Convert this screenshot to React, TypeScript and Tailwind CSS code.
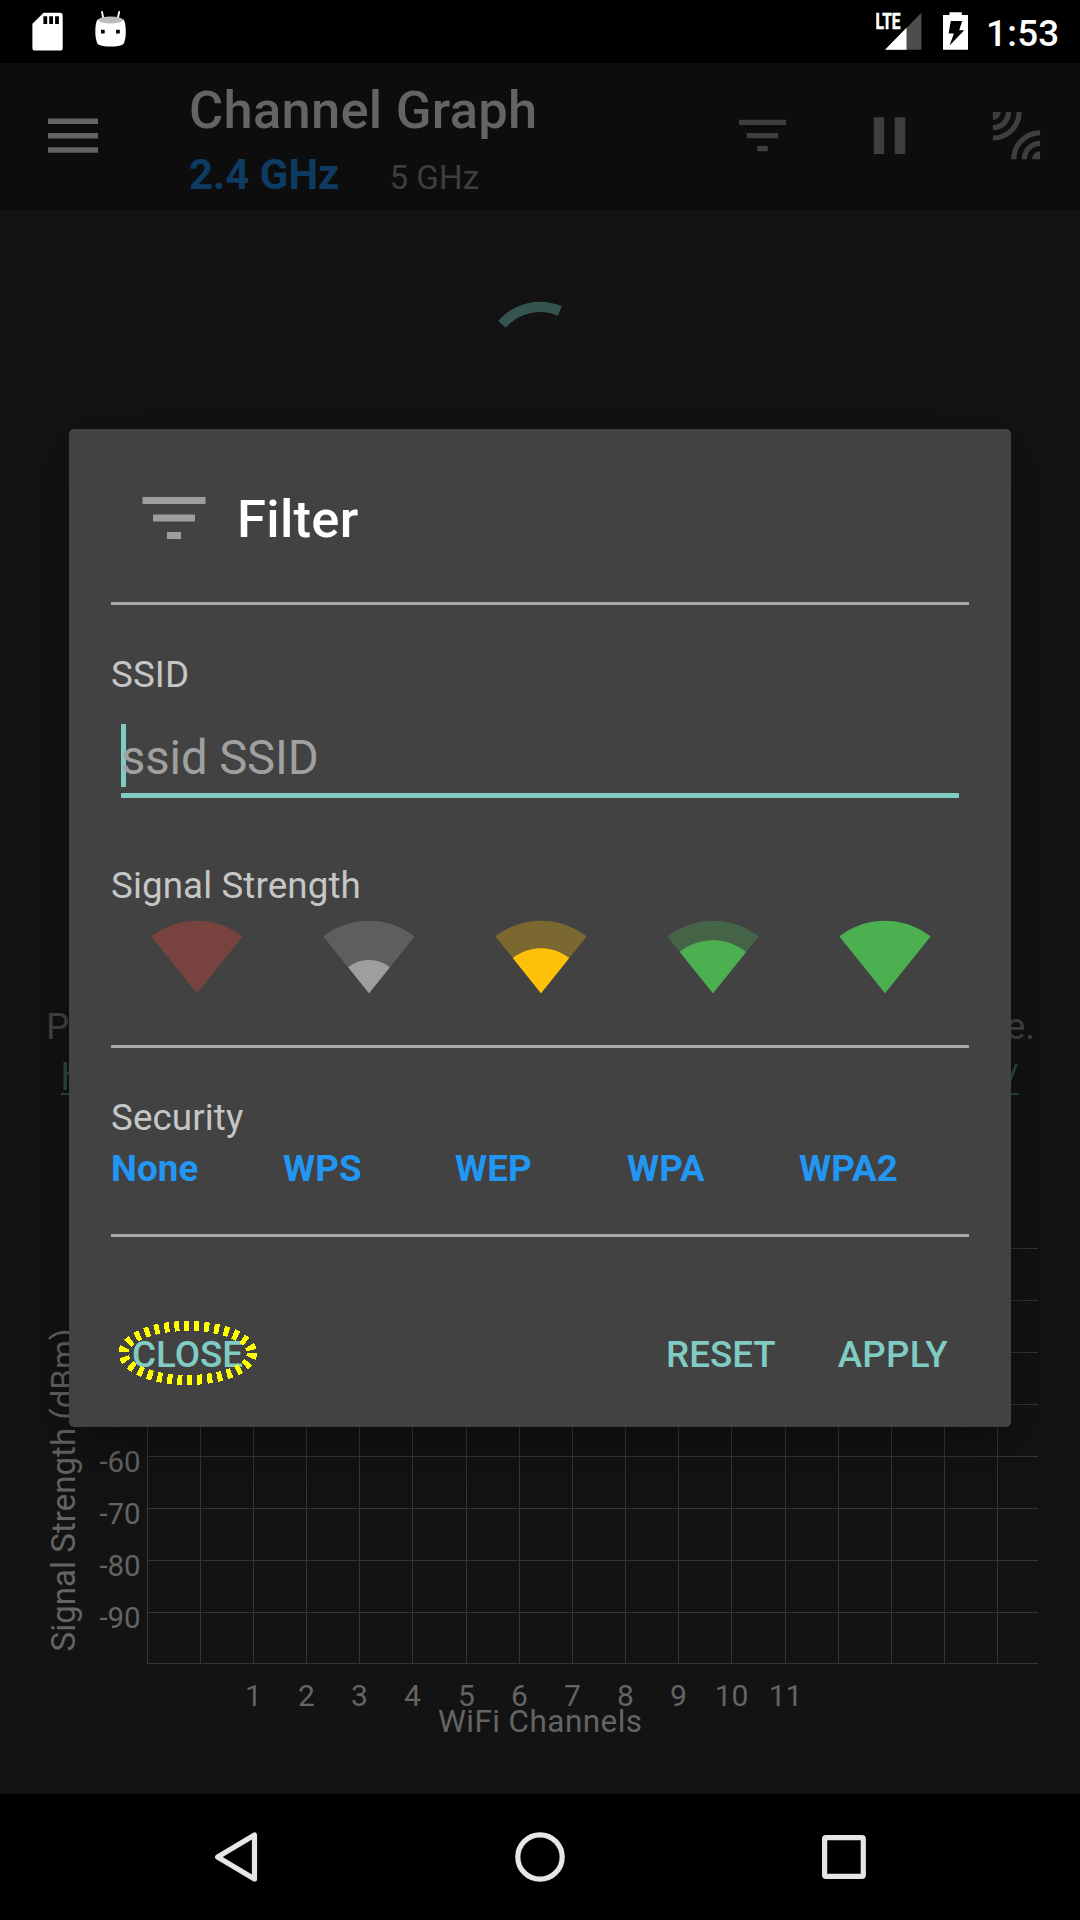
import React from 'react';

const FILTER = 'M10 18h4v-2h-4v2zM3 6v2h18V6H3zm3 7h12v-2H6v2z';
const PAUSE = 'M6 19h4V5H6v14zm8-14v14h4V5h-4z';
const LEAK =
  'M6 3H3v3c1.66 0 3-1.34 3-3zm8 0h-2c0 4.97-4.03 9-9 9v2c6.08 0 11-4.93 11-11zm-4 0H8c0 2.76-2.24 5-5 5v2c3.87 0 7-3.13 7-7zm0 18h2c0-4.97 4.03-9 9-9v-2c-6.07 0-11 4.93-11 11zm8 0h3v-3c-1.66 0-3 1.34-3 3zm-4 0h2c0-2.76 2.24-5 5-5v-2c-3.87 0-7 3.13-7 7z';

const WIFI_FULL =
  'M12.01 21.49L23.64 7c-.45-.34-4.93-4-11.64-4C5.28 3 .81 6.66.36 7l11.63 14.49.01.01.01-.01z';
const WIFI_1 = 'M6.67 14.86L12 21.49v.01l.01-.01 5.33-6.63C17.06 14.65 15.03 13 12 13s-5.06 1.65-5.33 1.86z';
const WIFI_2 = 'M4.79 12.52l7.2 8.98H12l.01-.01 7.2-8.98C18.85 12.24 16.1 10 12 10s-6.85 2.24-7.21 2.52z';
const WIFI_3 = 'M3.53 10.95l8.46 10.54.01.01.01-.01 8.46-10.54C20.04 10.62 16.81 8 12 8c-4.81 0-8.04 2.62-8.47 2.95z';

const strengths = [
  { color: '#f44336', opacity: 0.3, level: '' },
  { color: '#9e9e9e', opacity: 0.3, level: WIFI_1 },
  { color: '#ffc107', opacity: 0.3, level: WIFI_2 },
  { color: '#4caf50', opacity: 0.3, level: WIFI_3 },
  { color: '#4caf50', opacity: 1, level: '' },
];
const securities = ['None', 'WPS', 'WEP', 'WPA', 'WPA2'];

const columns = [147, 200, 253, 306, 359, 412, 466, 519, 572, 625, 678, 731, 785, 838, 891, 944, 997];
const rows = [1248, 1300, 1352, 1404, 1456, 1508, 1560, 1612, 1663];
const levels = [
  { text: '-60', y: 1471.7 },
  { text: '-70', y: 1523.7 },
  { text: '-80', y: 1575.7 },
  { text: '-90', y: 1627.7 },
];

function StatusBar() {
  return (
    <div className="flex h-[63px] items-start bg-black">
      <svg width="31" height="63" viewBox="32 0 31 63" className="ml-[32px]">
        <path
          fill="#fff"
          fillRule="evenodd"
          d="M43.6 12.7H60a2.7 2.7 0 0 1 2.7 2.7v32.5a2.7 2.7 0 0 1-2.7 2.7H35.1a2.7 2.7 0 0 1-2.7-2.7V23.8zM43.4 16.3V24h3.8v-7.7zM49.2 16.3V24H53v-7.7zM55.1 16.3V24h3.8v-7.7z"
        />
      </svg>
      <svg width="32" height="63" viewBox="95 0 32 63" className="ml-[32px]">
        <path d="M102 12l1.4 6.5M119.2 12l-1.5 6.5" stroke="#fff" strokeWidth="1.8" strokeLinecap="round" />
        <path
          fill="#fff"
          d="M97.7 19.5C95.8 22 95.3 27 95.3 32c0 5 .9 9 2.2 11.8 1.5 2 8 2.8 13.1 2.8s11.5-.8 13-2.8c1.3-2.8 2.2-6.8 2.2-11.800 0-5-.5-10-2.4-12.500z"
        />
        <ellipse cx="110.6" cy="20" rx="12.3" ry="3.5" fill="#bdbdbd" />
        <path d="M101 29.8h3.7v3.7H101zM116.1 29.8h3.7v3.7h-3.7z" fill="#000" />
      </svg>
      <svg width="46" height="63" viewBox="876 0 46 63" className="ml-auto">
        <path d="M885 49.7L921.4 12.7V49.7z" fill="#4d4d4d" />
        <path d="M885 49.7L906.5 27.8V49.7z" fill="#fff" />
        <text
          x="875.5"
          y="29.300"
          fill="#fff"
          stroke="#fff"
          strokeWidth="0.6"
          fontSize="22.5"
          fontWeight="700"
          fontFamily="Roboto, sans-serif"
          textLength="25"
          lengthAdjust="spacingAndGlyphs"
        >
          LTE
        </text>
      </svg>
      <svg width="25" height="63" viewBox="943 0 25 63" className="ml-[21px]">
        <path
          fill="#fff"
          fillRule="evenodd"
          d="M943 15h6.5v-2.8h12.3V15h6.2v34.8h-25zM950.8 21l-2.2 12.6h5.3l-4.3 12L964.2 30.300h-5L962.2 21z"
        />
      </svg>
      <div className="mr-[21px] ml-[18px] w-[73px] text-[36.75px] leading-[67px] font-medium tracking-[0.3px] whitespace-nowrap text-white">
        1:53
      </div>
    </div>
  );
}

function ActionIcon({ d }: { d: string }) {
  return (
    <svg width="63" height="63" viewBox="0 0 24 24" fill="#3e3e3e">
      <path d={d} />
    </svg>
  );
}

function AppBar() {
  return (
    <div className="flex h-[147px] items-start bg-[#0d0d0d]">
      <svg width="50" height="36" viewBox="0 0 50 36" fill="#646464" className="mt-[55px] ml-[48px]">
        <path d="M0 .6h50v5.5H0zM0 14.9h50v5.5H0zM0 29.3h50v5.5H0z" />
      </svg>
      <div className="ml-[91px] flex flex-col pt-[16px]">
        <div className="text-[52.5px] leading-[62px] font-medium tracking-[0.25px] text-[#646464]">Channel Graph</div>
        <div className="mt-[9px] flex items-baseline leading-[50px]">
          <span className="text-[42px] font-bold text-[#0d3b61]">2.4 GHz</span>
          <span className="ml-[50px] text-[33.2px] text-[#3e3e3e]">5 GHz</span>
        </div>
      </div>
      <div className="mt-[41px] mr-[32px] ml-auto flex gap-[64px]">
        <ActionIcon d={FILTER} />
        <ActionIcon d={PAUSE} />
        <ActionIcon d={LEAK} />
      </div>
    </div>
  );
}

function Chart() {
  return (
    <svg width="1080" height="695" viewBox="0 1099 1080 695" fontFamily="Roboto, sans-serif" fill="#646464">
      <g fill="#363636">
        {columns.map((x) => (
          <rect key={x} x={x} y="1248" width="1" height="416" />
        ))}
        {rows.map((y) => (
          <rect key={y} x="147" y={y} width="891" height="1" />
        ))}
      </g>
      <g fontSize="29.5" textAnchor="end">
        {levels.map((l) => (
          <text key={l.text} x="140.7" y={l.y}>
            {l.text}
          </text>
        ))}
      </g>
      <g fontSize="30" textAnchor="middle">
        {columns.slice(2, 13).map((x, i) => (
          <text key={x} x={x + 0.5} y="1705.7">
            {i + 1}
          </text>
        ))}
      </g>
      <text x="540" y="1731.7" fontSize="31.5" textAnchor="middle" textLength="204">
        WiFi Channels
      </text>
      <text transform="translate(75 1490) rotate(-90)" fontSize="33.1" textAnchor="middle">
        Signal Strength (dBm)
      </text>
    </svg>
  );
}

function Content() {
  return (
    <div className="flex h-[1584px] flex-col bg-[#131313]">
      <svg width="120" height="120" viewBox="480 297 120 120" className="mt-[87px] self-center">
        <path d="M502 324.3A50.2 50.2 0 0 1 559.8 310.9" fill="none" stroke="#35534f" strokeWidth="10.3" />
      </svg>
      <div className="mt-[588px] mr-[45px] ml-[46px] flex justify-between text-[36.75px] leading-[43px] text-[#444]">
        <span>P</span>
        <span>e.</span>
      </div>
      <div className="mt-[8px] mr-[61px] ml-[61px] flex justify-between text-[36.75px] leading-[43px] text-[#2a4a47] underline decoration-2 underline-offset-[3px]">
        <span>h</span>
        <span>/</span>
      </div>
      <Chart />
    </div>
  );
}

function NavBar() {
  return (
    <div className="flex h-[126px] items-center bg-black">
      <svg width="1080" height="126" viewBox="0 1794 1080 126" fill="none" stroke="#e6e6e6" strokeWidth="5.2">
        <path d="M217.6 1857L254.5 1835V1879z" strokeLinejoin="round" />
        <circle cx="540" cy="1857" r="22.2" />
        <rect x="824.6" y="1837.7" width="38.7" height="38.7" rx="1.5" />
      </svg>
    </div>
  );
}

function Divider() {
  return <div className="h-[3px] shrink-0 bg-[#a9a9a9]" />;
}

function Label({ children }: { children: React.ReactNode }) {
  return <div className="text-[36.75px] leading-[43px] tracking-[0.1px] text-[#c6c6c6]">{children}</div>;
}

function FilterDialog() {
  return (
    <div className="absolute top-[429px] left-[69px] flex h-[998px] w-[942px] flex-col rounded-[5px] bg-[#424242] px-[42px] shadow-[0_15px_60px_rgba(0,0,0,0.35)]">
      <div className="flex h-[173px] items-start gap-[21px] pt-[47px] pl-[21px]">
        <svg width="84" height="84" viewBox="0 0 24 24" fill="#9e9e9e">
          <path d={FILTER} />
        </svg>
        <div className="text-[52.5px] leading-[86px] font-medium tracking-[0.3px] text-white">Filter</div>
      </div>
      <Divider />
      <div className="mt-[48px]">
        <Label>SSID</Label>
      </div>
      <div className="relative mx-[10px] mt-[28px] h-[74px] border-b-[5px] border-[#80cbc4] text-[47.25px] leading-[68px] tracking-[-0.1px] text-[#a0a0a0]">
        <div className="absolute top-0 left-0 h-[63px] w-[5px] bg-[#80cbc4]" />
        <span className="relative">ssid SSID</span>
      </div>
      <div className="mt-[66px]">
        <Label>Signal Strength</Label>
      </div>
      <div className="mt-[2px] grid grid-cols-[repeat(5,172px)] justify-items-center">
        {strengths.map((s, i) => (
          <svg key={i} width="94" height="94" viewBox="0 0 24 24" fill={s.color}>
            <path d={WIFI_FULL} opacity={s.opacity} />
            {s.level && <path d={s.level} />}
          </svg>
        ))}
      </div>
      <div className="mt-[42px]">
        <Divider />
      </div>
      <div className="mt-[48px]">
        <Label>Security</Label>
      </div>
      <div className="mt-[8px] grid grid-cols-[repeat(5,172px)] text-[36.75px] leading-[43px] font-bold tracking-[0.1px] text-[#2196f3]">
        {securities.map((s) => (
          <div key={s}>{s}</div>
        ))}
      </div>
      <div className="mt-[44px]">
        <Divider />
      </div>
      <div className="mt-[96px] flex pr-[21px] pl-[21px] text-[36.75px] leading-[43px] font-medium text-[#80cbc4]">
        <div className="relative">
          CLOSE
          <svg
            width="144"
            height="70"
            viewBox="116 1318 144 70"
            className="absolute top-[-15px] left-[-16px] max-w-none"
            shapeRendering="crispEdges"
          >
            <ellipse
              cx="187.7"
              cy="1353"
              rx="64.2"
              ry="27"
              fill="none"
              stroke="#ff0"
              strokeWidth="10"
              strokeDasharray="5 5"
            />
          </svg>
        </div>
        <div className="ml-auto">RESET</div>
        <div className="ml-[62px] tracking-[0.25px]">APPLY</div>
      </div>
    </div>
  );
}

export default function App() {
  return (
    <div className="relative flex h-[1920px] w-[1080px] flex-col overflow-hidden bg-black font-['Roboto',sans-serif]">
      <StatusBar />
      <AppBar />
      <Content />
      <NavBar />
      <FilterDialog />
    </div>
  );
}
